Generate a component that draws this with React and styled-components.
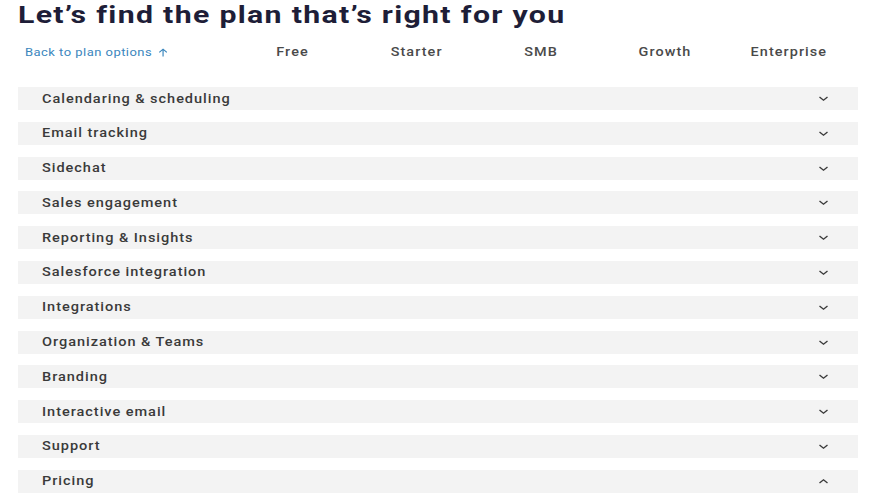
import React from 'react'
import styled, { createGlobalStyle } from 'styled-components'

const Global = createGlobalStyle`
  body {
    margin: 0;
    background: #fff;
    font-family: Roboto, "Liberation Sans", sans-serif;
  }
`

const Page = styled.div`
  width: 890px;
  padding: 0 32px 0 18px;
  box-sizing: border-box;
`

// the source renders its type wide, so text blocks are stretched horizontally
const Title = styled.h1`
  margin: 0;
  padding-top: 1px;
  font-size: 23px;
  line-height: 30px;
  font-weight: 700;
  letter-spacing: 1px;
  color: #1e1e38;
  display: inline-block;
  transform: scaleX(1.315);
  transform-origin: left center;
  white-space: nowrap;
`

const HeaderRow = styled.div`
  display: grid;
  grid-template-columns: 213px repeat(5, 124px);
  align-items: center;
  height: 44px;
  margin-top: -1px;
`

const BackLink = styled.a`
  justify-self: start;
  margin-left: 7px;
  font-size: 11px;
  letter-spacing: 0.4px;
  color: #3a86bd;
  text-decoration: none;
  display: flex;
  align-items: center;
  gap: 5px;
  transform: scaleX(1.18);
  transform-origin: left center;
`

const PlanName = styled.div`
  justify-self: center;
  font-size: 12px;
  font-weight: 500;
  letter-spacing: 0.9px;
  color: #4a4a4a;
  transform: scaleX(1.2);
`

const List = styled.div`
  display: flex;
  flex-direction: column;
  gap: 11.8px;
  margin-top: 13px;
`

const Row = styled.div`
  height: 23px;
  background: #f3f3f3;
  display: flex;
  align-items: center;
  justify-content: space-between;
  padding: 0 29px 0 24px;
`

const RowLabel = styled.span`
  display: inline-block;
  font-size: 12px;
  font-weight: 500;
  letter-spacing: 0.8px;
  color: #3a3a3a;
  transform: scaleX(1.21);
  transform-origin: left center;
`

const Chevron = ({ up }) => (
  <svg width="11" height="7" viewBox="0 0 11 7">
    <polyline
      points={up ? '1.5,5 5.5,1.8 9.5,5' : '1.5,2 5.5,5.2 9.5,2'}
      fill="none"
      stroke="#3a3a3a"
      strokeWidth="1.4"
    />
  </svg>
)

const ArrowUp = () => (
  <svg width="8" height="9" viewBox="0 0 8 9">
    <path d="M4 8.5V1.2M0.8 4.3L4 1.1l3.2 3.2" fill="none" stroke="#3a86bd" strokeWidth="1" />
  </svg>
)

const plans = ['Free', 'Starter', 'SMB', 'Growth', 'Enterprise']
const sections = [
  'Calendaring & scheduling',
  'Email tracking',
  'Sidechat',
  'Sales engagement',
  'Reporting & Insights',
  'Salesforce integration',
  'Integrations',
  'Organization & Teams',
  'Branding',
  'Interactive email',
  'Support',
  'Pricing',
]

export default function App() {
  return (
    <Page>
      <Global />
      <Title>Let’s find the plan that’s right for you</Title>
      <HeaderRow>
        <BackLink href="#">Back to plan options <ArrowUp /></BackLink>
        {plans.map((p) => (
          <PlanName key={p}>{p}</PlanName>
        ))}
      </HeaderRow>
      <List>
        {sections.map((s) => (
          <Row key={s}>
            <RowLabel>{s}</RowLabel>
            <Chevron up={s === 'Pricing'} />
          </Row>
        ))}
      </List>
    </Page>
  )
}
